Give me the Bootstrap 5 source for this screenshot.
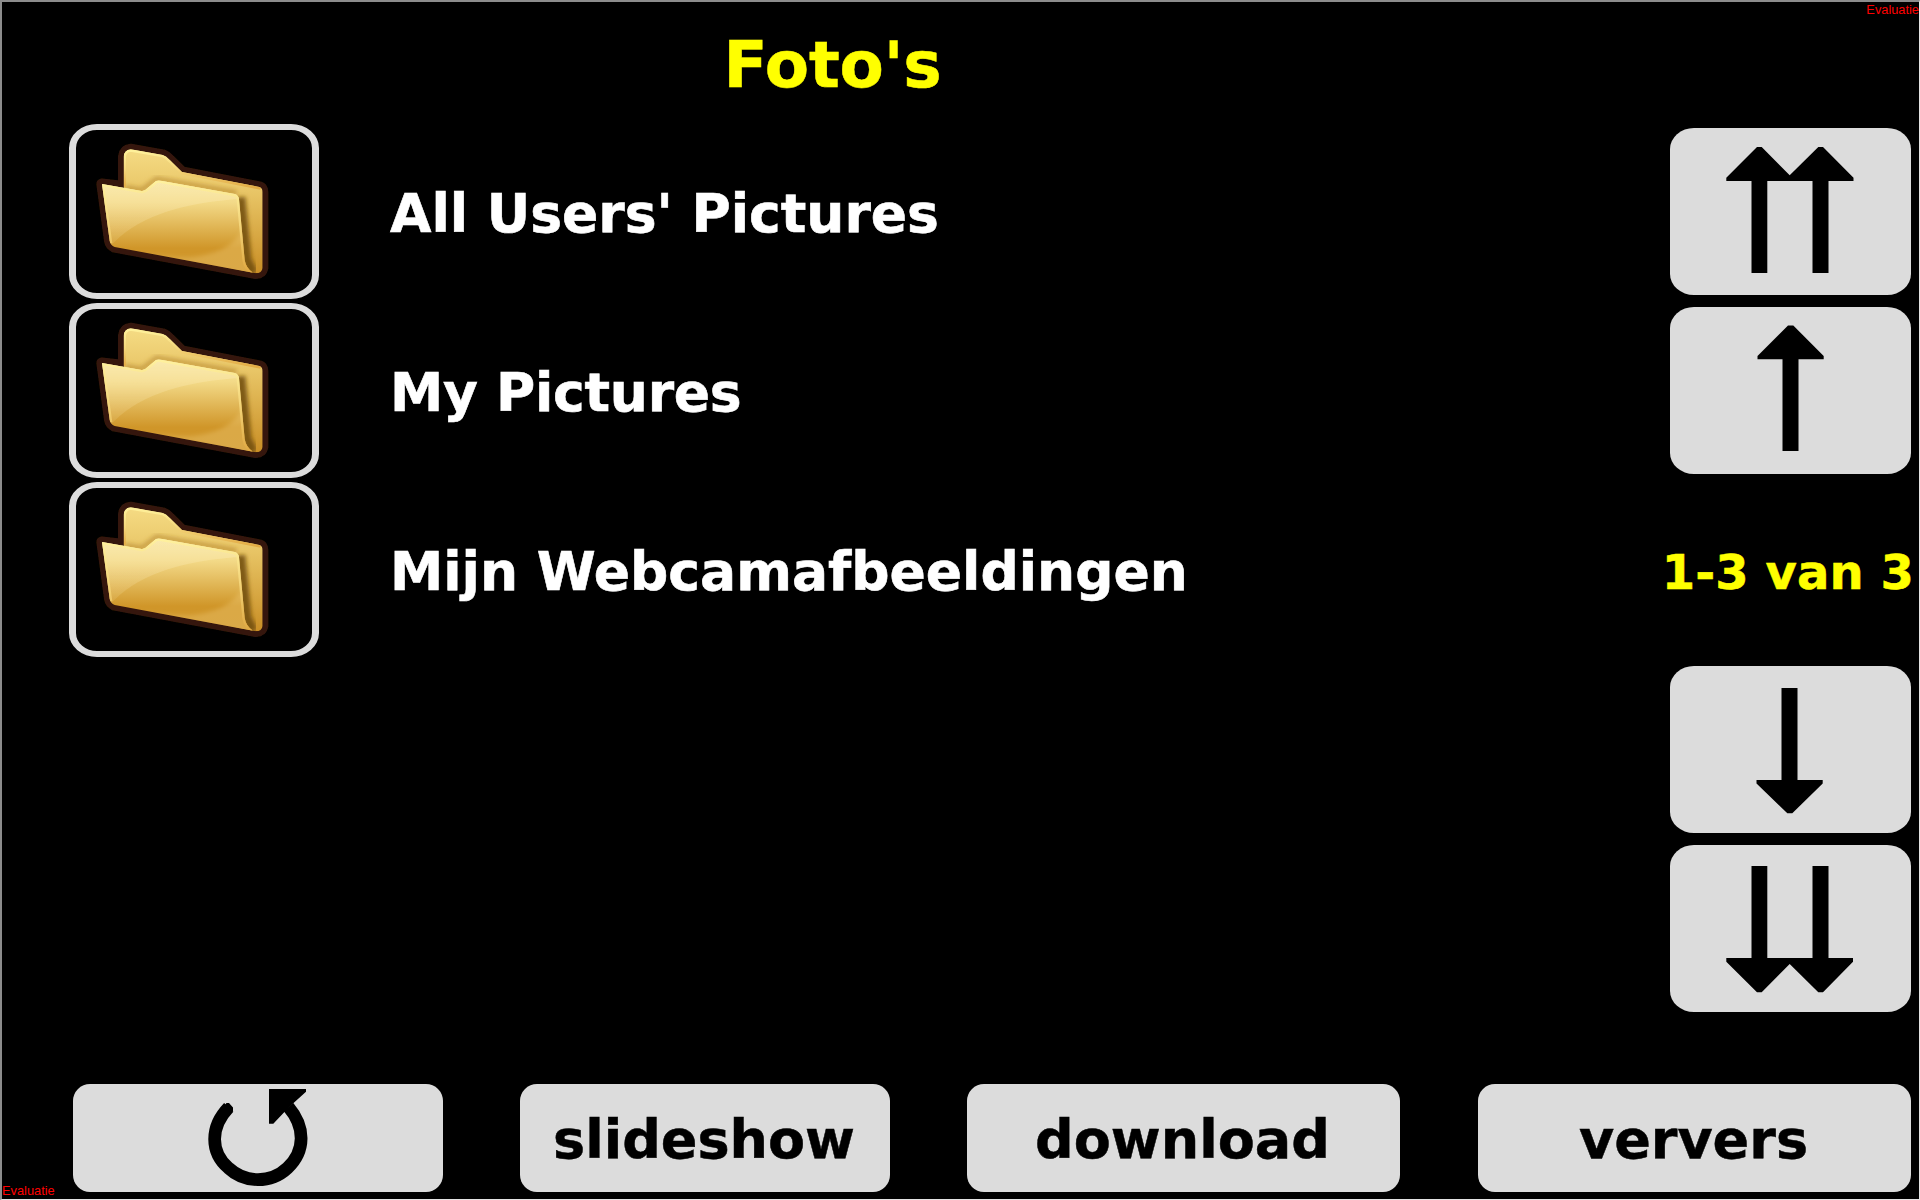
<!DOCTYPE html>
<html lang="nl">
<head>
<meta charset="utf-8">
<meta name="viewport" content="width=device-width, initial-scale=1">
<title>Foto's</title>
<link href="https://cdn.jsdelivr.net/npm/bootstrap@5.3.0/dist/css/bootstrap.min.css" rel="stylesheet">
<style>
body{background:#000;font-family:"DejaVu Sans",Verdana,sans-serif;font-weight:700;line-height:1}
.screen{width:1920px;height:1200px;background:#000;border:solid;border-width:2px 1px 1px 2px;border-color:#8c8c8c #e3e3e3 #e3e3e3 #8c8c8c}
.screen-title{height:122px;width:1661px;padding-top:31px;color:#ff0;font-size:64.5px;letter-spacing:-.2px;line-height:64px;-webkit-text-stroke:.5px #ff0}
.folder-list{padding-left:67px;gap:4px}
.folder-row{height:175px;gap:71px;color:#fff;font-size:53.5px;-webkit-text-stroke:.6px #fff}
.folder-row span{padding-top:5px}
.folder-row .tight{letter-spacing:-.25px}
.folder-btn{width:250px;height:175px;padding:0;background:#000;border:solid #dcdcdc;border-width:6px 7px;border-radius:28px/24px}
.pager{width:249px;padding-top:4px;padding-right:8px;gap:12px}
.key{background:#dcdcdc;color:#000;border:0;border-radius:24px/21px;padding:0}
.key:hover{background:#cfcfcf}
.pager .key{width:241px;height:167px}
.pager-count{height:168px;padding-top:4px;margin-right:-3px;color:#ff0;font-size:48px;letter-spacing:.1px;-webkit-text-stroke:.5px #ff0}
.footer-keys{padding:0 7px 7px 71px}
.footer-keys .key{height:108px;border-radius:17px;font-size:54px;font-weight:700;line-height:1}
.footer-keys .key-text{padding-top:4px;padding-right:2px;-webkit-text-stroke:.5px #000}
.w-370{width:370px}.w-433{width:433px}
.key-gap{margin-right:77px}
.key-gap-wide{margin-right:78px}
.eval-tag{color:#f00;font:400 12.8px/14px "Liberation Sans",Arial,sans-serif}
.eval-top{top:1px;right:0}
.eval-bottom{left:0;bottom:1px}
svg{display:block}
</style>
<script src="https://cdn.jsdelivr.net/npm/bootstrap@5.3.0/dist/js/bootstrap.bundle.min.js"></script>
</head>
<body>
<svg width="0" height="0" class="position-absolute" aria-hidden="true">
  <defs>
    <linearGradient id="gBack" x1="0" y1="0" x2="0" y2="1"><stop offset="0" stop-color="#f6dd86"/><stop offset=".35" stop-color="#e8c566"/><stop offset="1" stop-color="#c88c22"/></linearGradient>
    <linearGradient id="gFront" x1="0" y1="0" x2="0" y2="1"><stop offset="0" stop-color="#f8e6a4"/><stop offset=".25" stop-color="#f3da88"/><stop offset=".73" stop-color="#d09629"/><stop offset="1" stop-color="#cf962c"/></linearGradient>
    <linearGradient id="gShine" x1="0" y1="0" x2="0" y2="1"><stop offset="0" stop-color="#fff3c8" stop-opacity=".4"/><stop offset="1" stop-color="#fff0bc" stop-opacity=".1"/></linearGradient>
    <linearGradient id="gRim" x1="0" y1="0" x2="0" y2="1"><stop offset="0" stop-color="#fff29c"/><stop offset=".5" stop-color="#f5d77c"/><stop offset="1" stop-color="#e2aa43"/></linearGradient>
    <filter id="soft" x="-20%" y="-20%" width="140%" height="140%"><feGaussianBlur stdDeviation="6"/></filter>
    <filter id="edge" x="-10%" y="-10%" width="120%" height="120%"><feGaussianBlur stdDeviation="2"/></filter>
    <clipPath id="cBack"><path d="M191 230V140Q193 120 212 118L308 135Q318 138 330 151L366 186L598 231Q608 234 608 246V474Q605 490 588 490L250 420Z"/></clipPath>
    <clipPath id="cFront"><path d="M126 222L245 243Q254 244 262 235L288 213Q294 210 302 212L524 252Q536 256 537 268L554 450Q558 475 579 488L164 411Q151 405 149 392Z"/></clipPath>
    <symbol id="folder" viewBox="48 60 708 489">
      <path filter="url(#edge)" fill="#34190a" stroke="#34190a" stroke-width="34" stroke-linejoin="round" d="M191 230V140Q193 120 212 118L308 135Q318 138 330 151L366 186L598 231Q608 234 608 246V474Q605 490 588 490L164 411Q151 405 149 392L126 222Z"/>
      <g clip-path="url(#cBack)">
        <path fill="url(#gBack)" d="M180 110H620V500H180Z"/>
        <path filter="url(#soft)" fill="none" stroke="#72500f" stroke-opacity=".9" stroke-width="30" d="M541 262L560 450L580 490"/>
        <path filter="url(#soft)" fill="none" stroke="#a87626" stroke-opacity=".5" stroke-width="14" d="M195 232L245 240L290 206L530 248"/>
        <path filter="url(#edge)" fill="none" stroke="#9a6915" stroke-width="8" d="M606 240V475"/>
        <path filter="url(#edge)" fill="none" stroke="url(#gRim)" stroke-width="10" d="M193 230V140Q195 122 212 120L308 137Q318 140 330 153L366 188L602 234"/>
      </g>
      <g clip-path="url(#cFront)">
        <path fill="url(#gFront)" d="M120 205H590V492H120Z"/>
        <path filter="url(#edge)" fill="url(#gShine)" d="M110 195H550V266Q260 282 150 410L110 410Z"/>
        <path filter="url(#soft)" fill="#f5d488" fill-opacity=".3" d="M560 330Q532 425 405 440Q340 446 240 430L579 500Z"/>
        <path filter="url(#edge)" fill="none" stroke="url(#gRim)" stroke-width="10" stroke-opacity=".9" d="M152 400L127 223L245 245Q254 246 262 237L288 215Q294 212 302 214L522 254Q533 258 535 268L552 450Q556 475 576 486"/>
      </g>
    </symbol>
  </defs>
</svg>

<div class="screen position-relative d-flex flex-column overflow-hidden">
  <span class="eval-tag eval-top position-absolute">Evaluatie</span>
  <span class="eval-tag eval-bottom position-absolute">Evaluatie</span>

  <header class="screen-title text-center flex-shrink-0">Foto's</header>

  <main class="d-flex justify-content-between flex-grow-1">
    <div class="folder-list d-flex flex-column">
      <div class="folder-row d-flex align-items-center"><button class="folder-btn flex-shrink-0" aria-label="Map openen"><svg width="236" height="163"><use href="#folder"/></svg></button><span>All Users' Pictures</span></div>
      <div class="folder-row d-flex align-items-center"><button class="folder-btn flex-shrink-0" aria-label="Map openen"><svg width="236" height="163"><use href="#folder"/></svg></button><span class="tight">My Pictures</span></div>
      <div class="folder-row d-flex align-items-center"><button class="folder-btn flex-shrink-0" aria-label="Map openen"><svg width="236" height="163"><use href="#folder"/></svg></button><span>Mijn Webcamafbeeldingen</span></div>
    </div>
    <nav class="pager d-flex flex-column align-items-end flex-shrink-0">
      <button class="key" aria-label="Eerste"><svg width="241" height="167"><path d="M81.5 145V53H56.3V49.7L87 19H91.7L119.7 47.3L148.3 19H153L183.5 49.7V53H158.5V145H142.5V53H97.3V145Z"/></svg></button>
      <button class="key" aria-label="Vorige"><svg width="241" height="167"><path d="M112.5 144V52.3H87.5V49L118 18.500H123.3L153.7 49V52.3H128.5V144Z"/></svg></button>
      <div class="pager-count d-flex align-items-center justify-content-end text-nowrap">1-3 van 3</div>
      <button class="key" aria-label="Volgende"><svg width="241" height="167"><path d="M111.5 22V114H86.5V117.5L117.3 147.3H122.3L152.7 117.5V114H127.5V22Z"/></svg></button>
      <button class="key" aria-label="Laatste"><svg width="241" height="167"><path d="M81.5 21V113H56.3V116.8L87 147.3H91.7L119.7 119L148.3 147.3H153L183 116.8V113H158.5V21H142.5V113H97.3V21Z"/></svg></button>
    </nav>
  </main>

  <footer class="footer-keys d-flex flex-shrink-0">
    <button class="key w-370 key-gap" aria-label="Terug"><svg width="370" height="108"><path fill="none" stroke="#000" stroke-width="12.7" d="M155.7 23.4C137 43 137 68 155.5 84C172 99.500 198 99.500 214.500 84C232.500 67 232.500 43 215.500 23"/><path d="M151 22L153.500 19H156L160 23.500V27L157 29ZM196 5H233V7.700L220.300 19.300L210.700 28.700L200.300 39.700H196Z"/></svg></button>
    <button class="key key-text w-370 key-gap">slideshow</button>
    <button class="key key-text w-433 key-gap-wide">download</button>
    <button class="key key-text w-433">ververs</button>
  </footer>
</div>
</body>
</html>
